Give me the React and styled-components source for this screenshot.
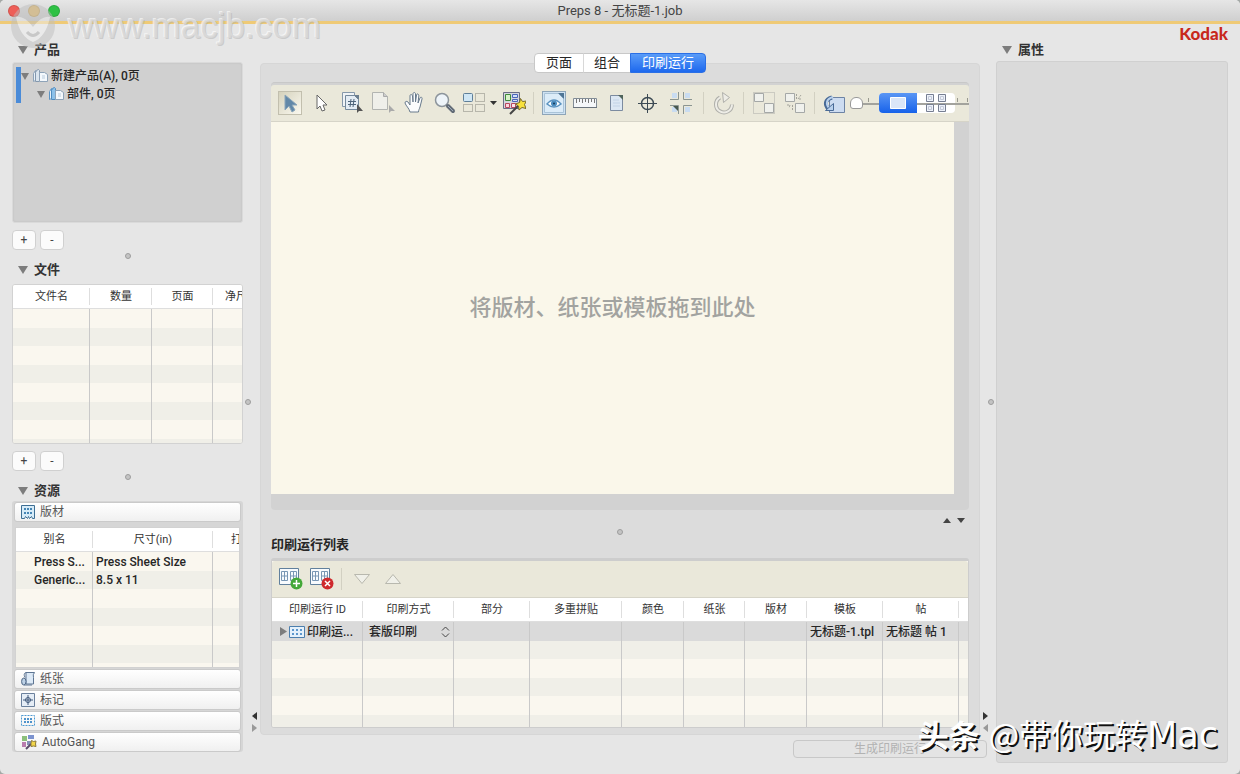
import React, { useState } from 'react'
import styled, { createGlobalStyle } from 'styled-components'

const GlobalStyle = createGlobalStyle`
  * {
    box-sizing: border-box;
  }
  body {
    margin: 0;
    background: #a4a8a6;
    font-family: Roboto, 'Noto Sans CJK SC', sans-serif;
    font-size: 12px;
    color: #262626;
  }
  button, input, select {
    font-family: inherit;
    font-size: inherit;
    color: inherit;
    margin: 0;
  }
  ul {
    list-style: none;
    margin: 0;
    padding: 0;
  }
  svg {
    display: block;
    flex: none;
  }
`

const Window = styled.div`
  position: relative;
  display: flex;
  flex-direction: column;
  min-height: 100vh;
  background: #e6e6e6;
  border-radius: 5px;
  overflow: hidden;
`
const TitleBar = styled.header`
  display: grid;
  grid-template-columns: 1fr auto 1fr;
  align-items: center;
  height: 24px;
  padding: 0 8px;
  background: linear-gradient(#e6e6e6, #cfcfcf);
  border-bottom: 3px solid #efca76;
`
const Title = styled.h1`
  margin: 0;
  font-size: 13px;
  line-height: 20px;
  font-weight: 400;
  color: #444;
`
const Lights = styled.div`
  display: flex;
  gap: 8px;
`
const Light = styled.button`
  width: 12px;
  height: 12px;
  padding: 0;
  border: 1px solid rgba(0, 0, 0, 0.12);
  border-radius: 50%;
  background: ${props => props.tone};
`
const Body = styled.div`
  flex: 1;
  display: grid;
  grid-template-columns: 243px 17px minmax(0, 1fr) 16px 232px;
  padding-right: 12px;
`
const Sidebar = styled.aside`
  display: flex;
  flex-direction: column;
  min-width: 0;
  padding: 18px 0 22px 12px;
`
const Heading = styled.h2`
  display: flex;
  align-items: center;
  gap: 6px;
  height: 16px;
  margin: 0;
  padding-left: 6px;
  font-size: 13px;
  line-height: 16px;
  font-weight: 600;
  color: #333;
`
const Tree = styled.ul`
  height: 161px;
  margin-top: 4px;
  padding: 4px 3px;
  background: #d0d0d0;
  border: 1px solid #dadada;
  border-radius: 3px;
  box-shadow: inset 0 0 2px #bbb;

  > li {
    border-left: 5px solid #4a8bd8;
  }
`
const TreeRow = styled.div`
  display: flex;
  align-items: center;
  gap: 3px;
  height: 18px;
  padding-left: ${props => (props.nested ? 16 : 0)}px;
  line-height: 16px;
  font-weight: 500;
  white-space: nowrap;
`
const ButtonRow = styled.div`
  display: flex;
  gap: 4px;
  margin-top: 7px;
`
const SmallButton = styled.button`
  width: 24px;
  height: 20px;
  padding: 0;
  border: 1px solid #d0d0d0;
  border-radius: 4px;
  background: #fbfbfb;
  font-size: 12px;
  line-height: 18px;
  color: #444;
`
const SplitRow = styled.div`
  display: flex;
  justify-content: center;
  align-items: center;
  height: 12px;
`
const Dot = styled.span`
  width: 6px;
  height: 6px;
  border: 1px solid #9d9d9d;
  border-radius: 50%;
  background: #c4c4c4;
`
const SplitColumn = styled.div`
  display: grid;
  grid-template-rows: 1fr auto 1fr;
  padding: ${props => (props.flip ? '6px 2px 0 3px' : '6px 3px 0 2px')};

  ${Dot} {
    grid-row: 2;
    justify-self: ${props => (props.flip ? 'end' : 'start')};
  }
`
const Arrows = styled.div`
  grid-row: 3;
  display: flex;
  flex-direction: column;
  gap: 4px;
  align-self: end;
  justify-self: ${props => (props.flip ? 'start' : 'end')};
  padding-bottom: 42px;
`
const GridBox = styled.div`
  flex: ${props => (props.fill ? '1 1 0' : 'none')};
  height: ${props => (props.fill ? 'auto' : props.tall)};
  min-height: 80px;
  margin: ${props => props.top || 0}px ${props => (props.fill ? 1 : 0)}px 0;
  overflow: hidden;
  background: #faf7ef;
  border: 1px solid #d2d2d2;
  border-radius: ${props => (props.fill ? 0 : 3)}px;
`
const DataTable = styled.table`
  table-layout: fixed;
  width: ${props => props.wide};
  border-collapse: separate;
  border-spacing: 0;
  font-size: 12px;

  th {
    height: 24px;
    padding: 1px 0 0;
    background: linear-gradient(90deg, transparent calc(100% - 1px), #dedede 0) 0 3px / 100% 17px no-repeat #fff;
    border-bottom: 1px solid #dedede;
    font-size: 11px;
    font-weight: 400;
    line-height: 16px;
    color: #333;
    white-space: nowrap;
  }
  td {
    height: 18px;
    padding: 0 3px;
    border-right: 1px solid #c9c9c9;
    line-height: 16px;
    font-weight: 500;
    white-space: nowrap;
    overflow: hidden;
    text-overflow: ellipsis;
  }
  tr:nth-child(odd) td {
    height: 19px;
  }
  tr:nth-child(even) td {
    background: #f0efe8;
  }
  tr[aria-selected='true'] td {
    background: #dadada;
  }
  tr td:last-child {
    border-right: 0;
  }
`
const Alias = styled.div`
  padding-left: 15px;
`
const Accordion = styled.div`
  flex: 1;
  display: flex;
  flex-direction: column;
  gap: 1px;
  margin-top: 2px;
  padding: 1px 2px 0;
  background: #d6d6d6;
  border-radius: 3px;
`
const AccordionButton = styled.button`
  display: flex;
  align-items: center;
  gap: 5px;
  height: 20px;
  padding: 0 6px;
  border: 1px solid #cacaca;
  border-radius: 3px;
  background: linear-gradient(#fff, #f0f0f0);
  color: #555;
  line-height: 16px;
`
const Main = styled.main`
  display: flex;
  flex-direction: column;
  min-width: 0;
  padding: 29px 0 16px;
`
const Tabs = styled.div`
  position: relative;
  align-self: center;
  display: flex;
  height: 20px;
  border: 1px solid #c8c8c8;
  border-radius: 4px;
  background: #fff;
`
const Tab = styled.button`
  height: 20px;
  margin: -1px;
  padding: 0 11px;
  border: 1px solid ${props => (props.active ? '#2a6fe6' : 'transparent')};
  border-right-color: ${props => (props.active ? '#2a6fe6' : '#d8d8d8')};
  border-radius: ${props => (props.active ? '0 4px 4px 0' : '0')};
  background: ${props => (props.active ? 'linear-gradient(#5a9cf8, #1d68ee)' : 'transparent')};
  color: ${props => (props.active ? '#fff' : '#262626')};
  font-size: 13px;
  line-height: 16px;
`
const Panel = styled.section`
  flex: 1;
  display: flex;
  flex-direction: column;
  margin-top: -10px;
  padding: 18px 10px 6px;
  background: #dcdcdc;
  border: 1px solid #d6d6d6;
  border-radius: 4px;
`
const Workspace = styled.div`
  flex: 1;
  display: flex;
  flex-direction: column;
  padding-top: 2px;
  background: #d2d2d2;
  border-top: 1px solid #c8c8c8;
  border-radius: 4px;
`
const Toolbar = styled.div`
  display: flex;
  align-items: center;
  height: 37px;
  padding: 0 0 0 3px;
  overflow: hidden;
  background: #eae8da;
  border-bottom: 1px solid #d6d4c8;
  border-radius: 3px 3px 0 0;
`
const Tool = styled.button`
  flex: none;
  display: flex;
  justify-content: center;
  align-items: center;
  gap: 4px;
  width: ${props => props.wide || 31}px;
  height: 28px;
  padding: 0;
  border: 0;
  background: none;
  opacity: ${props => (props.disabled ? 0.75 : 1)};
`
const Pressed = styled.span`
  display: flex;
  justify-content: center;
  align-items: center;
  width: 24px;
  height: 24px;
  background: ${props => (props.blue ? '#cfe2f2' : 'linear-gradient(135deg, #d5d2bc, #faf8ef)')};
  border: 1px solid ${props => (props.blue ? '#8ea5b8' : '#c2bfae')};
`
const Separator = styled.span`
  flex: none;
  width: 1px;
  height: 22px;
  margin: 0 4px;
  background: #d2d0c2;
`
const ZoomArea = styled.div`
  position: relative;
  flex: 1 0 118px;
  display: flex;
  align-items: center;
  height: 28px;
`
const Slider = styled.input`
  position: relative;
  z-index: 1;
  appearance: none;
  width: 100%;
  height: 12px;
  background: linear-gradient(#a3a39d, #a3a39d) 12px 6px / 100% 2px no-repeat;

  &::-webkit-slider-thumb {
    appearance: none;
    width: 13px;
    height: 12px;
    background: #fff;
    border: 1px solid #999;
    border-radius: 6px 6px 3px 3px;
  }
`
const Ticks = styled.svg`
  position: absolute;
  top: 9px;
  left: 0;
`
const ViewSwitch = styled.div`
  position: absolute;
  top: 4px;
  left: 29px;
  display: flex;
  border-radius: 4px;
  background: #fff;
`
const ViewButton = styled.button`
  position: ${props => (props.active ? 'relative' : 'static')};
  z-index: 2;
  display: flex;
  justify-content: center;
  align-items: center;
  width: 38px;
  height: 20px;
  padding: 0;
  border: 0;
  border-radius: 4px 0 0 4px;
  background: ${props => (props.active ? 'linear-gradient(#5a96f4, #1762ea)' : 'none')};
`
const Canvas = styled.div`
  flex: 1;
  display: flex;
  justify-content: center;
  align-items: center;
  margin: 0 15px 16px 0;
  background: #faf7ea;
  color: #a2a3a0;
  font-size: 22px;
  line-height: 32px;
  font-weight: 500;
`
const RunSplit = styled.div`
  display: grid;
  grid-template-columns: 1fr auto 1fr;
  height: 27px;
  padding: 8px 4px 0;

  ${Dot} {
    margin-top: 11px;
  }
`
const Collapse = styled.div`
  grid-column: 3;
  display: flex;
  gap: 6px;
  justify-self: end;
`
const ListTitle = styled.h2`
  margin: 0 0 5px;
  font-size: 13px;
  font-weight: 600;
  line-height: 16px;
`
const RunBox = styled.div`
  height: 170px;
  overflow: hidden;
  background: #faf7ef;
  border: 1px solid #cdcdcd;
  border-top-width: 3px;
  border-radius: 3px;
`
const RunId = styled.div`
  display: flex;
  align-items: center;
  gap: 2px;
  padding-left: 5px;
`
const Method = styled.label`
  display: flex;
  align-items: center;
  padding-left: 3px;

  select {
    flex: 1;
    min-width: 0;
    height: 17px;
    padding: 0;
    appearance: none;
    border: 0;
    background: none;
    font-weight: 500;
  }
`
const Generate = styled.button`
  align-self: flex-end;
  width: 194px;
  height: 18px;
  margin: 5px -7px 0 0;
  padding: 0;
  border: 1px solid #c8c8c8;
  border-radius: 4px;
  background: #e4e4e4;
  color: #b2b2b2;
  line-height: 16px;
`
const Inspector = styled.aside`
  display: flex;
  flex-direction: column;
  padding-bottom: 11px;
`
const Brand = styled.div`
  height: 18px;
  text-align: right;
  font-family: Lato, sans-serif;
  font-size: 17px;
  font-weight: 900;
  line-height: 20px;
  color: #c8281c;
`
const Properties = styled.div`
  flex: 1;
  margin-top: 3px;
  background: #dadada;
  border: 1px solid #d0d0d0;
  border-radius: 3px;
`
const SiteMark = styled.div`
  position: absolute;
  top: 3px;
  left: 10px;
  display: flex;
  align-items: center;
  gap: 12px;
  pointer-events: none;
  font-family: 'Liberation Sans', sans-serif;
  font-size: 35px;
  line-height: 46px;
  color: rgba(218, 218, 218, 0.8);
  text-shadow: 1px 1px 0 rgba(170, 170, 170, 0.45), -1px -1px 0 rgba(255, 255, 255, 0.6);
`
const AuthorMark = styled.div`
  position: absolute;
  right: 22px;
  bottom: 15px;
  display: flex;
  align-items: center;
  gap: 9px;
  pointer-events: none;
  font-family: 'Noto Sans CJK SC', sans-serif;
  font-size: 32px;
  line-height: 48px;
  color: #fff;
  text-shadow: 2px 2px 0 #111;

  b {
    font-size: 31px;
  }
  span {
    font-family: 'DejaVu Sans', sans-serif;
    font-size: 35px;
  }
`

const Triangle = ({ dir = 'down', color = '#7d7d7d', w = 10, h = 8 }) => {
  const points = {
    down: `0,0 ${w},0 ${w / 2},${h}`,
    up: `0,${h} ${w},${h} ${w / 2},0`,
    left: `${w},0 ${w},${h} 0,${h / 2}`,
    right: `0,0 0,${h} ${w},${h / 2}`
  }
  return (
    <svg width={w} height={h}>
      <polygon points={points[dir]} fill={color} />
    </svg>
  )
}

const Icon = ({ size = 24, box = 24, children }) => (
  <svg width={size} height={size} viewBox={`0 0 ${box} ${box}`} fill="none" strokeWidth="1">
    {children}
  </svg>
)

const ProductIcon = ({ blue }) => (
  <Icon size={16} box={16}>
    <path d="M1.500 5.500l2-3v10l-2 1z" fill="#e9f1f8" stroke={blue ? '#5b93c4' : '#8ea3b8'} />
    <path d="M3.500 4.500q1-3 3-3l1 1v11h-4z" fill={blue ? '#8cc1ea' : '#dbe5ee'} stroke={blue ? '#4e8cc0' : '#8498ae'} />
    <path d="M7.500 4.500h5l3 2v7h-8z" fill="#f4f8fc" stroke="#8ea3b8" />
    <path d="M10 8h3M10 10h3" stroke="#b9cbdc" />
  </Icon>
)

const CursorIcon = ({ light }) => (
  <Icon>
    <path
      d={light ? 'M8 4v14l3-3 2 5 3-1-2-5h4z' : 'M7 4v15l4-4 3 6 3-2-3-5h5z'}
      fill={light ? '#fff' : '#6288a8'}
      stroke={light ? '#666' : '#8aa5ba'}
    />
  </Icon>
)

const FrameIcon = () => (
  <Icon>
    <path d="M2.500 1.500h12v14h-12z" fill="#f0f3f6" stroke="#8698aa" />
    <path d="M5.500 4.500h9l4 4v10h-13z" fill="#e4ecf4" stroke="#75899c" />
    <path d="M14 4l5 5v-5z" fill="#6d7f90" />
    <path d="M11 8l-1 8M14 8l-1 8M8 10.500h8M8 13.500h8" stroke="#4f657b" />
    <path d="M17 13v9l2-2 4 0z" fill="#555" />
  </Icon>
)

const PageArrowIcon = () => (
  <Icon>
    <path d="M1.500 1.500h11l4 4v13h-15z" fill="#efefea" stroke="#b2b4b1" />
    <path d="M12.500 1.500v4h4" fill="#ccc" stroke="#aaa" />
    <path d="M18 14v8l2-2h4z" fill="#aaa" />
  </Icon>
)

const HandIcon = () => (
  <Icon>
    <path
      d="M8 21c-1-4-4-6-5-9 0-2 2-2 3-1l2 3V5c0-2 2-2 2.500 0l.5 6V3c0-2 2.500-2 2.500 0v8l1-7c.5-2 2.500-1 2.300 1L16 12l2-5c.6-1.500 2.500-.8 2 1l-2 8c-.6 2-1.500 3-1.500 5z"
      fill="#fbfcfd"
      stroke="#687a8c"
    />
  </Icon>
)

const MagnifierIcon = () => (
  <Icon>
    <circle cx="9" cy="9" r="6.500" fill="#eef4f9" stroke="#8d959c" strokeWidth="1.500" />
    <path d="M15 15l5 5" stroke="#626b76" strokeWidth="4" strokeLinecap="round" />
    <path d="M15 15l5 5" stroke="#9eabba" />
  </Icon>
)

const LayoutIcon = () => (
  <Icon>
    <rect x="1.500" y="2.500" width="9" height="8" rx="1" fill="#cfe6f5" stroke="#5f7f99" />
    <g stroke="#85857d" strokeDasharray="1 1">
      <path d="M13.500 2.500h9v8h-9zM1.500 13.500h9v7h-9zM13.500 13.500h9v7h-9z" />
    </g>
  </Icon>
)

const WizardIcon = ({ size = 24 }) => (
  <Icon size={size}>
    <path d="M1.500 1.500h16v16h-16z" fill="#d5d6de" stroke="#6a6c84" />
    <path d="M3.500 3.500h5v6h-5z" fill="#d7f2c8" stroke="#3f8a3a" />
    <path d="M10.500 3.500h5v3h-5z" fill="#d3e0fa" stroke="#4a65b8" />
    <path d="M10.500 8.500h5v2h-5z" fill="#d3e0fa" stroke="#4a65b8" />
    <path d="M3.500 12.500h4v4h-4z" fill="#fad6dc" stroke="#b8475f" />
    <path d="M9.500 12.500h4v4h-4z" fill="#fbe3ea" stroke="#b8475f" />
    <path d="M8 23l8-8" stroke="#444" strokeWidth="2" />
    <path d="M18.500 7.500l2 3 4-.5-2 3.500 1.500 4-4-1-3 2.500-.5-4-3-2 4-1.500z" fill="#f8e13c" stroke="#75682a" />
  </Icon>
)

const AutoGangIcon = () => (
  <Icon size={16} box={16}>
    <path d="M1 2h5v5H1z" fill="#8cc07c" />
    <path d="M7 1h6v4H7z" fill="#7c93cf" />
    <path d="M1 8h4v5H1z" fill="#b97cae" />
    <path d="M6 7h4v4H6z" fill="#8790b8" />
    <path d="M5 15l5-5" stroke="#5a4a6a" strokeWidth="2" />
    <path d="M10.500 6.500l2 1 2.500-.5-.5 3 .5 2.500-2.500-.5-2.500.5v-3z" fill="#f2d64a" stroke="#8d7a38" />
  </Icon>
)

const EyeIcon = () => (
  <Icon size={22} box={22}>
    <path d="M1.500 1.500h14l5 5v14h-19z" fill="#dcecf8" stroke="#a9c3d8" />
    <path d="M15 1h6v6z" fill="#4f7595" />
    <path d="M4 12q7-8 14 0q-7 6-14 0z" fill="#fff" stroke="#5b93c0" strokeWidth="1.500" />
    <circle cx="11" cy="11.500" r="3" fill="#4d8fc2" />
    <circle cx="11" cy="11.500" r="1" fill="#143a58" />
  </Icon>
)

const RulerIcon = () => (
  <Icon>
    <path d="M.5 7.500h23v9H.5z" fill="#f5f7f9" stroke="#828c96" />
    <path d="M3.500 8v4M6.500 8v3M9.500 8v4M12.500 8v3M15.500 8v4M18.500 8v3M21.500 8v4" stroke="#777" />
    <path d="M0 16.500h24" stroke="#6b747e" />
  </Icon>
)

const PageIcon = () => (
  <Icon>
    <path d="M6.500 4.500h12v15h-12z" fill="#dce7f3" stroke="#7c8ba0" />
    <path d="M14 4h5v5z" fill="#50645c" />
    <path d="M9 9h6M9 12h7M9 15h7" stroke="#c3d3e6" />
  </Icon>
)

const TargetIcon = () => (
  <Icon>
    <circle cx="12.500" cy="12.500" r="6" stroke="#3c4a54" strokeWidth="1.500" />
    <path d="M12.500 3v19M3 12.500h19" stroke="#3c4a54" />
  </Icon>
)

const MarksIcon = () => (
  <Icon>
    <path d="M3 2h5v5H3zM16 2h5v5h-5zM3 16h5v5H3zM16 16h5v5h-5z" fill="#c9dcf1" />
    <path d="M1 8.500h8.500V1M23 8.500h-8.500V1M1 14.500h8.500V23M23 14.500h-8.500V23" stroke="#8b9591" />
    <path d="M4 15h5v5z" fill="#48584f" />
  </Icon>
)

const RotateIcon = () => (
  <Icon>
    <path d="M8 6.500a8 8 0 1 0 12 7" stroke="#9b9d9a" strokeWidth="4" />
    <path d="M8 6.500a8 8 0 1 0 12 7" stroke="#eeeeea" strokeWidth="2" />
    <path d="M10.500 1.500l7 5-6 5z" fill="#eeeeea" stroke="#9b9d9a" />
  </Icon>
)

const GroupIcon = ({ split }) => (
  <Icon>
    {split ? (
      <g stroke="#8d8d88">
        <path d="M13.500 3v5M18 4l-3 4h4M9.500 14v5M4 14h3l-1 3" strokeDasharray="2 1" />
      </g>
    ) : (
      <path d="M1.500 1.500h21v21h-21z" stroke="#999" strokeDasharray="1 1" />
    )}
    <path d="M2.500 2.500h9v8h-9zM12.500 12.500h9v9h-9z" fill="#f3f4f4" stroke="#8f9396" />
  </Icon>
)

const ReturnIcon = () => (
  <Icon>
    <path d="M6.500 6.500h15v15h-15z" fill="#cddcf1" stroke="#6d83a4" />
    <path d="M9 6.500c-7 2-8 7-3 12" stroke="#496a96" strokeWidth="4" />
    <path d="M10 6c-7 2-8 7-3 12" stroke="#b8d0ec" strokeWidth="2" />
    <path d="M2.500 19.500h8v-7z" fill="#b8d0ec" stroke="#496a96" />
  </Icon>
)

const FourUpIcon = () => (
  <svg width="20" height="18" fill="#eef2fa" stroke="#777f92">
    <path d="M.5.5h7v7h-7zM12.500.5h7v7h-7zM.5 10.500h7v7h-7zM12.500 10.500h7v7h-7z" />
    <path d="M2.500 2.500h3v3h-3zM14.500 2.500h3v3h-3zM2.500 12.500h3v3h-3zM14.500 12.500h3v3h-3z" stroke="#c3c9d8" />
  </svg>
)

const RunIcon = ({ badge, mark }) => (
  <Icon>
    <path d="M.5 1.500h19v16H.5z" fill="#f8fbfe" stroke="#61809d" />
    <path d="M2.500 4.500h6v9h-6zM11.500 4.500h6v9h-6zM2.500 9h6M11.500 9h6M5.500 4v10M14.500 4v10" stroke="#7997b5" />
    <circle cx="17.500" cy="16.500" r="6" fill={badge} />
    <path d={mark} stroke="#fff" strokeWidth="1.500" />
  </Icon>
)

const SheetIcon = () => (
  <svg width="16" height="12" fill="none">
    <path d="M.5.5h15v11H.5z" fill="#e5f1fb" stroke="#4c7fae" />
    <path d="M3 3h2v2H3zM7 3h2v2H7zM11 3h2v2h-2zM3 7h2v2H3zM7 7h2v2H7zM11 7h2v2h-2z" fill="#5d97cd" />
  </svg>
)

const PlateIcon = () => (
  <Icon size={14} box={14}>
    <path d="M.5.5h13v13h-2l-1-2-2 2-1-2-1 2-2-2-1 2h-3z" fill="#d6ebf8" stroke="#3d6e94" />
    <path d="M3 3h2v2H3zM6 3h2v2H6zM9 3h2v2H9zM3 7h2v2H3zM6 7h2v2H6zM9 7h2v2H9z" fill="#4585b4" />
  </Icon>
)

const PaperIcon = () => (
  <Icon size={14} box={14}>
    <path d="M5 .5h8.500q-2 2-1 5v6.500H5V7z" fill="#dce9f6" stroke="#5d7593" />
    <ellipse cx="2.800" cy="9.500" rx="2.200" ry="3.500" fill="#bdd1e6" stroke="#4e6786" />
    <path d="M5 .5q-3 1-1 5M3 13h8" stroke="#5d7593" />
  </Icon>
)

const MarkIcon = () => (
  <Icon size={14} box={14}>
    <path d="M.5.5h13v13H.5z" fill="#e5edf6" stroke="#6b819d" />
    <circle cx="7" cy="7" r="2.500" stroke="#41597a" />
    <path d="M7 2v10M2 7h10" stroke="#41597a" />
  </Icon>
)

const PatternIcon = () => (
  <Icon size={14} box={14}>
    <rect x=".5" y="1.500" width="13" height="10" stroke="#4e9bd3" strokeDasharray="2 1" />
    <path d="M3 4h2v2H3zM6 4h2v2H6zM9 4h2v2H9zM3 7h2v2H3zM6 7h2v2H6zM9 7h2v2H9z" fill="#4e93cb" />
  </Icon>
)

const Stepper = () => (
  <svg width="9" height="12" fill="none" stroke="#444">
    <path d="M1 4.500l3.500-3.500L8 4.500M1 7.500L4.500 11 8 7.500" />
  </svg>
)

const MarkLogo = () => (
  <svg width="46" height="46" opacity="0.5">
    <circle cx="23" cy="23" r="22" fill="#bdbdbd" />
    <path d="M6 14Q14 12 23 24Q32 12 40 14Q36 34 23 39Q10 34 6 14z" fill="#eee" />
    <path d="M17 29q6 7 12 0" fill="none" stroke="#aaa" strokeWidth="3" />
  </svg>
)

const PlusMinus = ({ label }) => (
  <ButtonRow>
    <SmallButton aria-label={`添加${label}`}>+</SmallButton>
    <SmallButton aria-label={`删除${label}`}>-</SmallButton>
  </ButtonRow>
)

const Cols = ({ widths }) => (
  <colgroup>
    {widths.map((w, i) => (
      <col key={i} style={{ width: w }} />
    ))}
  </colgroup>
)

const Grid = ({ widths, heads, rows, blank, selected }) => (
  <DataTable wide={`${widths.reduce((a, b) => a + b, 0)}px`}>
    <Cols widths={widths} />
    <thead>
      <tr>
        {heads.map((head, i) => (
          <th key={i} scope="col">{head}</th>
        ))}
      </tr>
    </thead>
    <tbody>
      {rows.map((row, i) => (
        <tr key={i} aria-selected={selected === i}>
          {row.map((cell, j) => (
            <td key={j}>{cell}</td>
          ))}
        </tr>
      ))}
      {Array.from({ length: blank }, (_, i) => (
        <tr key={`blank${i}`}>
          {heads.map((_, j) => (
            <td key={j} />
          ))}
        </tr>
      ))}
    </tbody>
  </DataTable>
)

const tabs = ['页面', '组合', '印刷运行']

function App() {
  const [tab, setTab] = useState('印刷运行')
  const [zoom, setZoom] = useState(0)

  const plates = [
    [<Alias>Press S...</Alias>, 'Press Sheet Size', ''],
    [<Alias>Generic...</Alias>, '8.5 x 11', '']
  ]
  const runs = [
    [
      <RunId>
        <Triangle dir="right" w={7} h={9} />
        <SheetIcon />
        印刷运...
      </RunId>,
      <Method>
        <select aria-label="印刷方式" defaultValue="套版印刷">
          <option>套版印刷</option>
        </select>
        <Stepper />
      </Method>,
      '', '', '', '', '', '无标题-1.tpl', '无标题 帖 1', ''
    ]
  ]

  return (
    <>
      <GlobalStyle />
      <Window>
        <TitleBar>
          <Lights>
            <Light tone="#ee5f58" aria-label="关闭" />
            <Light tone="#e8bf6c" aria-label="最小化" />
            <Light tone="#2fc145" aria-label="缩放" />
          </Lights>
          <Title>Preps 8 - 无标题-1.job</Title>
        </TitleBar>
        <Body>
          <Sidebar>
            <Heading><Triangle />产品</Heading>
            <Tree>
              <li>
                <TreeRow><Triangle w={8} h={7} /><ProductIcon />新建产品(A), 0页</TreeRow>
                <ul>
                  <li>
                    <TreeRow nested><Triangle w={8} h={7} /><ProductIcon blue />部件, 0页</TreeRow>
                  </li>
                </ul>
              </li>
            </Tree>
            <PlusMinus label="产品" />
            <SplitRow><Dot /></SplitRow>
            <Heading><Triangle />文件</Heading>
            <GridBox tall="160px" top={6}>
              <Grid widths={[77, 62, 61, 57]} heads={['文件名', '数量', '页面', '净尺寸']} rows={[]} blank={8} />
            </GridBox>
            <PlusMinus label="文件" />
            <SplitRow><Dot /></SplitRow>
            <Heading><Triangle />资源</Heading>
            <Accordion>
              <AccordionButton aria-expanded="true"><PlateIcon />版材</AccordionButton>
              <GridBox fill top={4}>
                <Grid widths={[77, 120, 58]} heads={['别名', '尺寸(in)', '打孔']} rows={plates} blank={6} />
              </GridBox>
              <AccordionButton><PaperIcon />纸张</AccordionButton>
              <AccordionButton><MarkIcon />标记</AccordionButton>
              <AccordionButton><PatternIcon />版式</AccordionButton>
              <AccordionButton><AutoGangIcon />AutoGang</AccordionButton>
            </Accordion>
          </Sidebar>

          <SplitColumn>
            <Dot />
            <Arrows>
              <Triangle dir="left" color="#333" w={5} h={8} />
              <Triangle dir="right" color="#999" w={5} h={8} />
            </Arrows>
          </SplitColumn>

          <Main>
            <Tabs role="tablist">
              {tabs.map(name => (
                <Tab key={name} role="tab" aria-selected={tab === name} active={tab === name ? 1 : 0} onClick={() => setTab(name)}>
                  {name}
                </Tab>
              ))}
            </Tabs>
            <Panel>
              <Workspace>
                <Toolbar>
                  <Tool aria-label="选择"><Pressed><CursorIcon /></Pressed></Tool>
                  <Tool aria-label="直接选择"><CursorIcon light /></Tool>
                  <Tool aria-label="编号"><FrameIcon /></Tool>
                  <Tool aria-label="页面选择"><PageArrowIcon /></Tool>
                  <Tool aria-label="移动"><HandIcon /></Tool>
                  <Tool aria-label="放大"><MagnifierIcon /></Tool>
                  <Tool aria-label="排列" wide={38}><LayoutIcon /><Triangle color="#333" w={7} h={4} /></Tool>
                  <Tool aria-label="自动"><WizardIcon /></Tool>
                  <Separator />
                  <Tool aria-label="预览"><Pressed blue><EyeIcon /></Pressed></Tool>
                  <Tool aria-label="标尺"><RulerIcon /></Tool>
                  <Tool aria-label="页"><PageIcon /></Tool>
                  <Tool aria-label="套准"><TargetIcon /></Tool>
                  <Tool aria-label="裁切标记" wide={37}><MarksIcon /></Tool>
                  <Separator />
                  <Tool aria-label="旋转" disabled><RotateIcon /></Tool>
                  <Separator />
                  <Tool aria-label="成组" disabled><GroupIcon /></Tool>
                  <Tool aria-label="取消成组" disabled><GroupIcon split /></Tool>
                  <Separator />
                  <Tool aria-label="翻转"><ReturnIcon /></Tool>
                  <ZoomArea>
                    <Ticks width="118" height="5" stroke="#99998f">
                      <path d="M18.500 0v4M107.500 0v4M117.500 0v4" />
                    </Ticks>
                    <Slider type="range" aria-label="缩放比例" min="0" max="100" value={zoom} onChange={e => setZoom(e.target.value)} />
                    <ViewSwitch>
                      <ViewButton active={1} aria-label="单个">
                        <svg width="16" height="12"><path d="M.5.5h15v11H.5z" fill="#dbe6f8" stroke="#fff" /></svg>
                      </ViewButton>
                      <ViewButton aria-label="多个"><FourUpIcon /></ViewButton>
                    </ViewSwitch>
                  </ZoomArea>
                </Toolbar>
                <Canvas>将版材、纸张或模板拖到此处</Canvas>
              </Workspace>
              <RunSplit>
                <span />
                <Dot />
                <Collapse>
                  <Triangle dir="up" color="#444" w={8} h={5} />
                  <Triangle color="#444" w={8} h={5} />
                </Collapse>
              </RunSplit>
              <ListTitle>印刷运行列表</ListTitle>
              <RunBox>
                <Toolbar>
                  <Tool aria-label="添加印刷运行"><RunIcon badge="#43a838" mark="M14 16.500h7M17.500 13v7" /></Tool>
                  <Tool aria-label="删除印刷运行"><RunIcon badge="#cf2a2d" mark="M15 14l5 5M20 14l-5 5" /></Tool>
                  <Separator />
                  <Tool aria-label="下移" disabled><Icon><path d="M4.500 7.500h15l-7.500 9z" fill="#f3f3ee" stroke="#a8a8a0" /></Icon></Tool>
                  <Tool aria-label="上移" disabled><Icon><path d="M4.500 16.500h15l-7.500-9z" fill="#f3f3ee" stroke="#a8a8a0" /></Icon></Tool>
                </Toolbar>
                <Grid
                  widths={[91, 91, 76, 92, 62, 61, 62, 76, 76, 200]}
                  heads={['印刷运行 ID', '印刷方式', '部分', '多重拼贴', '颜色', '纸张', '版材', '模板', '帖', '']}
                  rows={runs}
                  blank={6}
                  selected={0}
                />
              </RunBox>
            </Panel>
            <Generate disabled>生成印刷运行</Generate>
          </Main>

          <SplitColumn flip>
            <Dot />
            <Arrows flip>
              <Triangle dir="right" color="#333" w={5} h={8} />
              <Triangle dir="left" color="#999" w={5} h={8} />
            </Arrows>
          </SplitColumn>

          <Inspector>
            <Brand>Kodak</Brand>
            <Heading><Triangle />属性</Heading>
            <Properties />
          </Inspector>
        </Body>
        <SiteMark><MarkLogo />www.macjb.com</SiteMark>
        <AuthorMark><b>头条</b><div>@带你玩转<span>Mac</span></div></AuthorMark>
      </Window>
    </>
  )
}

export default App
